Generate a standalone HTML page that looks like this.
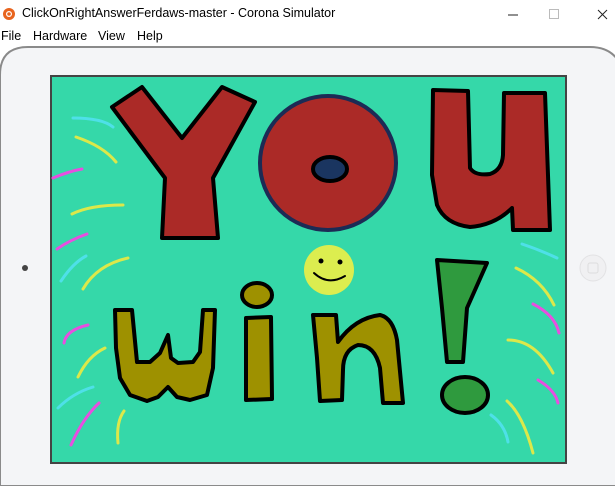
<!DOCTYPE html>
<html><head><style>
body{margin:0;width:615px;height:486px;overflow:hidden;background:#fff;font-family:"Liberation Sans",sans-serif;position:relative}
.t{position:absolute;left:22px;top:6px;font-size:12.5px;color:#000}
.m{position:absolute;top:29px;font-size:12.5px;color:#000}
</style></head><body>
<svg width="615" height="486" style="position:absolute;left:0;top:0">
<circle cx="9" cy="14" r="6" fill="#e8641e"/><circle cx="9" cy="14" r="3" fill="#fff"/><circle cx="9" cy="14" r="1.8" fill="#e8641e"/>
<line x1="508" y1="15" x2="518" y2="15" stroke="#222" stroke-width="1"/>
<rect x="549.5" y="9.5" width="9" height="9" fill="none" stroke="#bbb"/>
<path d="M598 10 L607 19 M607 10 L598 19" stroke="#222" stroke-width="1"/>
<path d="M0 486 L0 75 Q0 47 28 47 L590 47 Q620 47 625 80 L625 486 Z" fill="#f4f5f7" stroke="#8a8a8a" stroke-width="2"/>
<circle cx="25" cy="268" r="3" fill="#444"/>
<circle cx="593" cy="268" r="13" fill="#f0f0f2" stroke="#e2e2e4"/>
<rect x="588" y="263" width="10" height="10" rx="2" fill="none" stroke="#ddd"/>
<rect x="51" y="76" width="515" height="387" fill="#35d8a9" stroke="#444" stroke-width="2"/>
<g fill="none" stroke-width="3" stroke-linecap="round">
<path d="M73 118 Q102 118 113 127" stroke="#4ee0e8"/>
<path d="M76 137 Q103 146 116 162" stroke="#dce84a"/>
<path d="M53 178 Q70 171 82 169" stroke="#e84ee0"/>
<path d="M72 214 Q90 205 123 205" stroke="#dce84a"/>
<path d="M57 249 Q70 240 87 234" stroke="#e84ee0"/>
<path d="M61 281 Q73 263 86 256" stroke="#4ee0e8"/>
<path d="M83 289 Q97 265 128 258" stroke="#dce84a"/>
<path d="M64 343 Q66 330 88 325" stroke="#e84ee0"/>
<path d="M78 377 Q88 356 105 348" stroke="#dce84a"/>
<path d="M58 408 Q73 393 93 387" stroke="#4ee0e8"/>
<path d="M71 445 Q83 418 99 403" stroke="#e84ee0"/>
<path d="M118 443 Q116 422 124 411" stroke="#dce84a"/>
<path d="M522 244 Q540 250 557 258" stroke="#4ee0e8"/>
<path d="M516 268 Q542 280 554 305" stroke="#dce84a"/>
<path d="M533 304 Q555 315 559 333" stroke="#e84ee0"/>
<path d="M508 340 Q535 340 553 373" stroke="#dce84a"/>
<path d="M538 380 Q555 390 558 403" stroke="#e84ee0"/>
<path d="M507 401 Q523 415 533 453" stroke="#dce84a"/>
<path d="M491 415 Q505 425 508 442" stroke="#4ee0e8"/>
</g>
<g stroke="#000" stroke-width="4" stroke-linejoin="round">
<path d="M112 107 L142 87 L182 138 L222 87 L255 102 L213 178 L218 238 L162 238 L165 178 Z" fill="#ab2a27"/>
<ellipse cx="328" cy="163" rx="68" ry="67" fill="#ab2a27" stroke="#1c2b55"/>
<ellipse cx="330" cy="169" rx="17" ry="12" fill="#1a3560"/>
<path d="M433 90 L468 91 L470 168 Q475 176 490 174 Q502 170 503 155 L504 93 L545 93 L550 230 L513 230 L512 208 Q495 225 470 227 Q445 224 437 205 L432 175 Z" fill="#ab2a27"/>
<path d="M115 310 L132 310 L137 362 L150 362 L160 353 L168 335 L171 358 L178 363 L193 362 L200 352 L203 310 L215 310 L213 368 L207 395 L190 400 L177 397 L168 387 L158 397 L147 401 L130 395 L120 378 L116 348 Z" fill="#9e9100"/>
<ellipse cx="257" cy="295" rx="15" ry="12" fill="#9e9100"/>
<path d="M246 318 L271 317 L272 399 L246 400 Z" fill="#9e9100"/>
<path d="M313 315 L336 315 L338 342 Q355 318 380 315 Q393 318 397 340 L403 403 L383 403 L380 368 Q375 345 358 345 Q343 350 343 370 L342 400 L320 401 L317 358 Z" fill="#9e9100"/>
<path d="M437 260 L487 263 L467 308 L463 362 L447 362 L442 308 Z" fill="#2f9a3e"/>
<ellipse cx="465" cy="395" rx="23" ry="18" fill="#2f9a3e"/>
</g>
<circle cx="329" cy="270" r="25" fill="#dced4f"/>
<circle cx="321" cy="261" r="2.5" fill="#000"/><circle cx="340" cy="262" r="2.5" fill="#000"/>
<path d="M314 273 Q328 286 345 276" fill="none" stroke="#000" stroke-width="2" stroke-linecap="round"/>
</svg>
<div class="t">ClickOnRightAnswerFerdaws-master - Corona Simulator</div>
<div class="m" style="left:1px">File</div>
<div class="m" style="left:33px">Hardware</div>
<div class="m" style="left:98px">View</div>
<div class="m" style="left:137px">Help</div>
</body></html>
